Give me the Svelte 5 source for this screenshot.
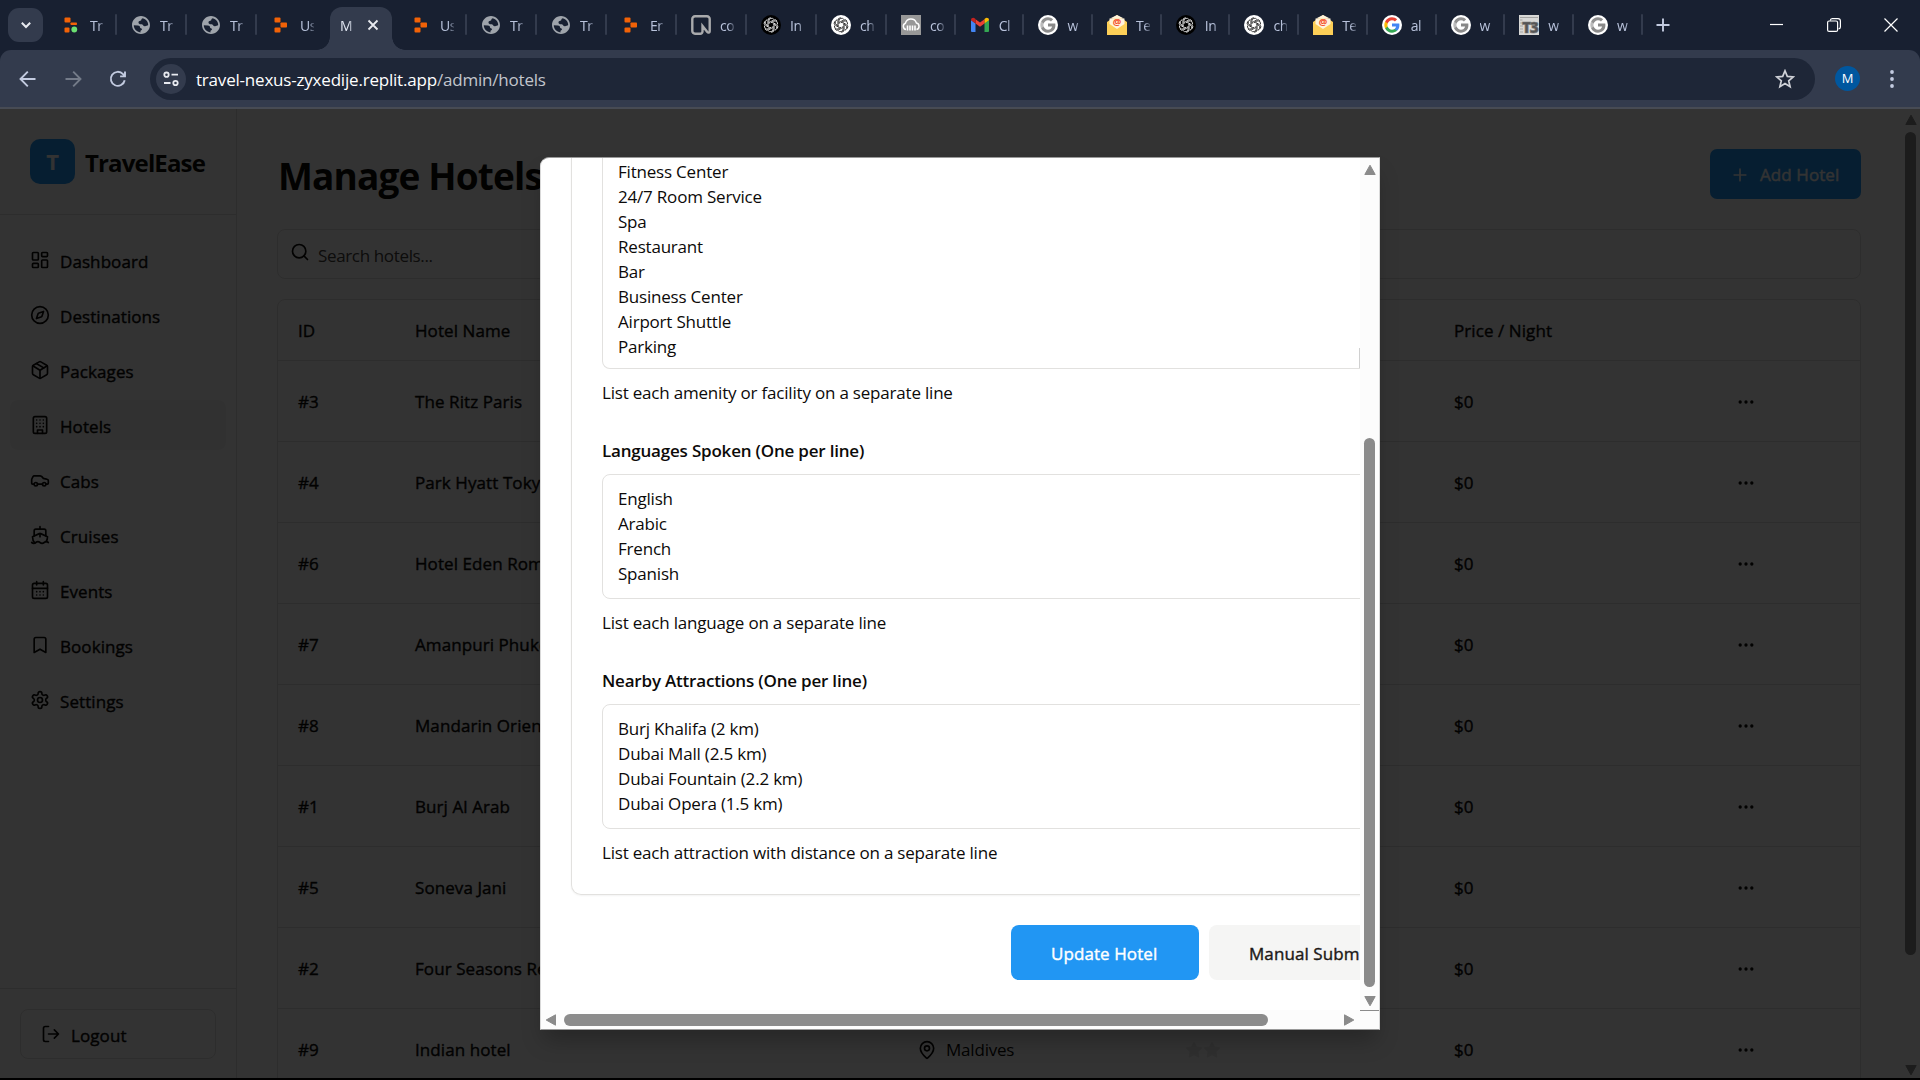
<script>
  const tabs = [
    { icon: 'replit-dot', label: 'Tr' },
    { icon: 'globe', label: 'Tr' },
    { icon: 'globe', label: 'Tr' },
    { icon: 'replit', label: 'Us', bare: true },
    { icon: null, label: 'M', active: true },
    { icon: 'replit', label: 'Us' },
    { icon: 'globe', label: 'Tr' },
    { icon: 'globe', label: 'Tr' },
    { icon: 'replit', label: 'Er' },
    { icon: 'neon', label: 'co' },
    { icon: 'gpt-dark', label: 'In' },
    { icon: 'gpt', label: 'ch' },
    { icon: 'cloud', label: 'co' },
    { icon: 'gmail', label: 'Cl' },
    { icon: 'g-grey', label: 'w' },
    { icon: 'mail', label: 'Te' },
    { icon: 'gpt-dark', label: 'In' },
    { icon: 'gpt', label: 'ch' },
    { icon: 'mail', label: 'Te' },
    { icon: 'g', label: 'al' },
    { icon: 'g-grey', label: 'w' },
    { icon: 't3', label: 'w' },
    { icon: 'g-grey', label: 'w' }
  ];
  const nav = ['Dashboard', 'Destinations', 'Packages', 'Hotels', 'Cabs', 'Cruises', 'Events', 'Bookings', 'Settings'];
  const hotels = [
    [3, 'The Ritz Paris'],
    [4, 'Park Hyatt Tokyo'],
    [6, 'Hotel Eden Rome'],
    [7, 'Amanpuri Phuket'],
    [8, 'Mandarin Oriental'],
    [1, 'Burj Al Arab'],
    [5, 'Soneva Jani'],
    [2, 'Four Seasons Resort'],
    [9, 'Indian hotel', 'Maldives']
  ];
  const amenities = ['Fitness Center', '24/7 Room Service', 'Spa', 'Restaurant', 'Bar', 'Business Center', 'Airport Shuttle', 'Parking'];
  const languages = ['English', 'Arabic', 'French', 'Spanish'];
  const attractions = ['Burj Khalifa (2 km)', 'Dubai Mall (2.5 km)', 'Dubai Fountain (2.2 km)', 'Dubai Opera (1.5 km)'];
  const petals = [0, 60, 120, 180, 240, 300];
</script>

{#snippet favicon(name)}
  <svg class="fav" viewBox="0 0 20 20">
    {#if name === 'replit' || name === 'replit-dot'}
      <g fill="#f26207">
        <rect x="3.500" y="2.500" width="6" height="5" rx="1" />
        <rect x="9.500" y="7.500" width="6.500" height={name === 'replit' ? 5 : 2.6} rx=".8" />
        <rect x="3.500" y="12.500" width={name === 'replit' ? 6 : 5} height="5" rx="1" />
      </g>
      {#if name === 'replit-dot'}<circle cx="13.300" cy="14.500" r="2.900" fill="#6be072" />{/if}
    {:else if name === 'globe'}
      <path transform="translate(-.8 -.8) scale(.9)" fill="#9fa4ab" d="M12 2C6.480 2 2 6.480 2 12s4.480 10 10 10 10-4.480 10-10S17.520 2 12 2zm-.6 18.200C7 19.700 4 16.100 4 12.300l4.600.2c1.600.1 2.200.7 2.300 1.900.1.900.7 1.200 1.500 1.400.9.300 1 1.600-.2 2-.7.2-.8 1-.8 2.400zM17.300 13.200c-1.300.5-2.500.1-3-.9-.4-.8-1.100-1.100-2.300-1.100-1.700 0-2.800-.8-2.800-2 0-1.300.9-1.700 2-1.800 1.100-.1 1.200-.8 1.300-1.700.1-.7.7-1 1.500-1.300 3.600 1 6 4 6 7.600 0 .6-1.400.7-2.700 1.200z" />
    {:else if name === 'neon'}
      <path d="M4 1.300h12A2.700 2.700 0 0 1 18.700 4v12.200c0 1.500-1.500 1.900-2.400.8L11.500 11v5.500a2.200 2.200 0 0 1-2.200 2.200H4A2.700 2.700 0 0 1 1.300 16V4A2.700 2.700 0 0 1 4 1.300Z" fill="#182031" stroke="#a9aaac" stroke-width="2.400" />
    {:else if name === 'gpt' || name === 'gpt-dark'}
      <circle cx="10" cy="10" r="10" fill={name === 'gpt' ? '#fff' : '#000'} />
      <g fill="none" stroke={name === 'gpt' ? '#222' : '#eee'} stroke-width=".85">
        {#each petals as a}
          <path d="M8 9V5.600a2.700 2.700 0 0 1 4.700-1.400M8.300 7.500l3.900-2.300a2.900 2.900 0 0 1 4 1" transform="rotate({a} 10 10)" />
        {/each}
      </g>
    {:else if name === 'cloud'}
      <rect width="20" height="20" fill="#989898" />
      <path d="M5 14.500a3.300 3.300 0 0 1-.6-6.300 5.800 5.800 0 0 1 11-.3 3.400 3.400 0 0 1 .1 6.600" fill="none" stroke="#fff" stroke-width="1.500" />
      <path d="M6.500 10.500v5M9 10.500v5M11.500 10.500v5M14 10.500v5" stroke="#fff" stroke-width="1.600" />
    {:else if name === 'gmail'}
      <path d="M1 16V5l4.500 3.400V17H2a1 1 0 0 1-1-1Z" fill="#4285f4" />
      <path d="M19 16V5l-4.500 3.400V17H18a1 1 0 0 0 1-1Z" fill="#34a853" />
      <path d="M5.500 8.400V4.200L10 7.600l4.500-3.400v4.200L10 11.800Z" fill="#ea4335" />
      <path d="M1 5.200c0-2.200 2.300-3 3.900-1.800l.6.500v4.500L1 5.300Z" fill="#c5221f" />
      <path d="M19 5.200c0-2.200-2.300-3-3.900-1.800l-.6.500v4.500L19 5.300Z" fill="#fbbc04" />
    {:else if name === 'g' || name === 'g-grey'}
      <circle cx="10" cy="10" r="10" fill="#fff" />
      <g transform="translate(1.600 1.600) scale(.7)">
        <path fill={name === 'g' ? '#4285f4' : '#888'} d="M22.560 12.250c0-.78-.07-1.530-.2-2.250H12v4.260h5.920c-.26 1.370-1.040 2.530-2.210 3.310v2.770h3.570c2.080-1.920 3.280-4.740 3.280-8.090z" />
        <path fill={name === 'g' ? '#34a853' : '#8c8c8c'} d="M12 23c2.970 0 5.460-.98 7.280-2.660l-3.570-2.770c-.98.66-2.230 1.060-3.710 1.060-2.860 0-5.290-1.930-6.160-4.530H2.180v2.840C3.990 20.530 7.700 23 12 23z" />
        <path fill={name === 'g' ? '#fbbc05' : '#bbb'} d="M5.840 14.090c-.22-.66-.35-1.360-.35-2.090s.13-1.430.35-2.090V7.070H2.180C1.430 8.550 1 10.220 1 12s.43 3.450 1.180 4.930l3.660-2.840z" />
        <path fill={name === 'g' ? '#ea4335' : '#909090'} d="M12 5.380c1.620 0 3.060.56 4.210 1.640l3.150-3.150C17.450 2.090 14.970 1 12 1 7.700 1 3.990 3.470 2.180 7.070l3.660 2.840c.87-2.600 3.300-4.530 6.160-4.530z" />
      </g>
    {:else if name === 'mail'}
      <path d="M0 7 10 0l10 7v13H0Z" fill="#fdcf57" />
      <path d="M2.500 3.500h15V9L10 14 2.500 9Z" fill="#fff3dc" />
      <path d="m3 3.500 7-3.500 7 3.500Z" fill="#fff3dc" />
      <text x="10" y="10.200" text-anchor="middle" font-size="9.500" font-weight="700" fill="#f4512c">@</text>
    {:else if name === 't3'}
      <rect width="20" height="20" fill="#d8d8d6" />
      <path d="M1 2.500h18M1 5h2.500M1 8h2M1 11h3M1 14h3M1 17h3" stroke="#a5a5a3" stroke-width="1" />
      <text x="3" y="18" font-size="15.500" font-weight="800" letter-spacing="-1.500" fill="#555" stroke="#777" stroke-width=".6">T3</text>
    {/if}
  </svg>
{/snippet}

{#snippet icon(name)}
  <svg class="ico" viewBox="0 0 24 24">
    {#if name === 'Dashboard'}
      <rect width="7" height="9" x="3" y="3" rx="1" /><rect width="7" height="5" x="14" y="3" rx="1" /><rect width="7" height="9" x="14" y="12" rx="1" /><rect width="7" height="5" x="3" y="16" rx="1" />
    {:else if name === 'Destinations'}
      <circle cx="12" cy="12" r="10" /><path d="m16.240 7.760-1.804 5.411a2 2 0 0 1-1.265 1.265L7.760 16.240l1.804-5.411a2 2 0 0 1 1.265-1.265z" />
    {:else if name === 'Packages'}
      <path d="M11 21.730a2 2 0 0 0 2 0l7-4A2 2 0 0 0 21 16V8a2 2 0 0 0-1-1.730l-7-4a2 2 0 0 0-2 0l-7 4A2 2 0 0 0 3 8v8a2 2 0 0 0 1 1.730z" /><path d="M12 22V12" /><path d="m3.300 7 7.703 4.734a2 2 0 0 0 1.994 0L20.700 7" /><path d="m7.500 4.270 9 5.150" />
    {:else if name === 'Hotels'}
      <rect width="16" height="20" x="4" y="2" rx="2" /><path d="M9 22v-4h6v4M8 6h.01M16 6h.01M12 6h.01M12 10h.01M12 14h.01M16 10h.01M16 14h.01M8 10h.01M8 14h.01" />
    {:else if name === 'Cabs'}
      <path d="M19 17h2c.6 0 1-.4 1-1v-3c0-.9-.7-1.700-1.500-1.900C18.700 10.600 16 10 16 10s-1.300-1.400-2.200-2.300c-.5-.4-1.100-.7-1.800-.7H5c-.6 0-1.100.4-1.400.9l-1.400 2.900A3.700 3.700 0 0 0 2 12v4c0 .6.4 1 1 1h2" /><circle cx="7" cy="17" r="2" /><path d="M9 17h6" /><circle cx="17" cy="17" r="2" />
    {:else if name === 'Cruises'}
      <path d="M12 10.189V14M12 2v3M19 13V7a2 2 0 0 0-2-2H7a2 2 0 0 0-2 2v6" /><path d="M19.380 20A11.600 11.600 0 0 0 21 14l-8.188-3.639a2 2 0 0 0-1.624 0L3 14a11.600 11.600 0 0 0 2.810 7.760" /><path d="M2 21c.6.5 1.200 1 2.500 1 2.500 0 2.500-2 5-2 1.300 0 1.900.5 2.500 1s1.200 1 2.500 1c2.500 0 2.500-2 5-2 1.300 0 1.900.5 2.500 1" />
    {:else if name === 'Events'}
      <path d="M8 2v4M16 2v4" /><rect width="18" height="18" x="3" y="4" rx="2" /><path d="M3 10h18M8 14h.01M12 14h.01M16 14h.01M8 18h.01M12 18h.01M16 18h.01" />
    {:else if name === 'Bookings'}
      <path d="m19 21-7-4-7 4V5a2 2 0 0 1 2-2h10a2 2 0 0 1 2 2v16z" />
    {:else if name === 'Settings'}
      <path d="M12.220 2h-.44a2 2 0 0 0-2 2v.18a2 2 0 0 1-1 1.730l-.43.25a2 2 0 0 1-2 0l-.15-.08a2 2 0 0 0-2.730.73l-.22.38a2 2 0 0 0 .73 2.730l.15.1a2 2 0 0 1 1 1.720v.51a2 2 0 0 1-1 1.740l-.15.09a2 2 0 0 0-.73 2.730l.22.38a2 2 0 0 0 2.730.73l.15-.08a2 2 0 0 1 2 0l.43.25a2 2 0 0 1 1 1.730V20a2 2 0 0 0 2 2h.44a2 2 0 0 0 2-2v-.18a2 2 0 0 1 1-1.730l.43-.25a2 2 0 0 1 2 0l.15.08a2 2 0 0 0 2.730-.73l.22-.39a2 2 0 0 0-.73-2.730l-.15-.08a2 2 0 0 1-1-1.740v-.5a2 2 0 0 1 1-1.740l.15-.09a2 2 0 0 0 .73-2.730l-.22-.38a2 2 0 0 0-2.730-.73l-.15.08a2 2 0 0 1-2 0l-.43-.25a2 2 0 0 1-1-1.730V4a2 2 0 0 0-2-2z" /><circle cx="12" cy="12" r="3" />
    {:else if name === 'logout'}
      <path d="M9 21H5a2 2 0 0 1-2-2V5a2 2 0 0 1 2-2h4M16 17l5-5-5-5M21 12H9" />
    {:else if name === 'search'}
      <circle cx="11" cy="11" r="8" /><path d="m21 21-4.300-4.300" />
    {:else if name === 'plus'}
      <path d="M5 12h14M12 5v14" />
    {:else if name === 'dots'}
      <circle cx="12" cy="12" r="1" /><circle cx="19" cy="12" r="1" /><circle cx="5" cy="12" r="1" />
    {:else if name === 'pin'}
      <path d="M20 10c0 4.993-5.539 10.193-7.399 11.799a1 1 0 0 1-1.202 0C9.539 20.193 4 14.993 4 10a8 8 0 0 1 16 0" /><circle cx="12" cy="10" r="3" />
    {:else if name === 'star'}
      <path class="star" d="M12 2l3.090 6.260L22 9.270l-5 4.870 1.180 6.880L12 17.770l-6.180 3.250L7 14.140 2 9.270l6.910-1.010z" />
    {/if}
  </svg>
{/snippet}

{#snippet arrow(dir)}
  <svg class="arrow {dir}" viewBox="0 0 12 12"><path d="M6 1.200 11.200 10.500H.8Z" /></svg>
{/snippet}

<div class="screen">
  <header class="tabstrip">
    <button class="tab-search" aria-label="Search tabs">
      <svg viewBox="0 0 12 12"><path d="m1.800 3.800 4.200 4.200 4.200-4.200" /></svg>
    </button>
    <div class="tabs">
      {#each tabs as tab, i}
        <div class="tab" class:active={tab.active} class:narrow={i > 11} class:bare={tab.bare || tab.active}>
          {#if tab.icon}{@render favicon(tab.icon)}{/if}
          <span class="tab-label">{tab.label}</span>
          {#if tab.active}<svg class="tab-close" viewBox="0 0 12 12"><path d="m1.500 1.500 9 9m0-9-9 9" /></svg>{/if}
        </div>
      {/each}
    </div>
    <svg class="new-tab" viewBox="0 0 14 14"><path d="M7 .5v13M.5 7h13" /></svg>
    <div class="win-controls">
      <svg viewBox="0 0 14 14"><path d="M0 6.500h13" /></svg>
      <svg viewBox="0 0 14 14"><rect x=".6" y="3" width="10" height="10.400" rx="1.500" /><path d="M3.300 2.600C3.400 1.200 4 .6 5.200.6H11a2.500 2.500 0 0 1 2.400 2.500V9c0 1-.7 1.700-1.800 1.900" /></svg>
      <svg viewBox="0 0 14 14"><path d="m.5.500 13 13m0-13-13 13" /></svg>
    </div>
  </header>

  <div class="toolbar">
    <div class="history">
      <svg viewBox="0 0 20 20"><path d="M17.500 10h-15M9.800 2.700 2.500 10l7.300 7.300" /></svg>
      <svg class="off" viewBox="0 0 20 20"><path d="M2.500 10h15M10.200 2.700l7.300 7.300-7.300 7.300" /></svg>
      <svg viewBox="0 0 20 20"><path d="M16.700 11.200A7 7 0 1 1 15 5.100l1.900 2M17 2.500v4.900h-4.900" /></svg>
    </div>
    <div class="omnibox">
      <span class="site"><svg viewBox="0 0 18 18"><circle cx="4.500" cy="4.700" r="2.200" /><path d="M9.500 4.700H16M2 13h6.500" /><circle cx="13.500" cy="13" r="2.200" /></svg></span>
      <span class="url"><b>travel-nexus-zyxedije.replit.app</b>/admin/hotels</span>
      <svg class="fav-star" viewBox="0 0 20 20"><path d="m10 1.800 2.300 5.600 6 .5-4.600 3.900 1.400 5.900-5.100-3.200-5.100 3.200 1.400-5.900L1.700 7.900l6-.5Z" /></svg>
    </div>
    <span class="avatar">M</span>
    <svg class="kebab" viewBox="0 0 4 18"><circle cx="2" cy="2" r="1.900" /><circle cx="2" cy="9" r="1.900" /><circle cx="2" cy="16" r="1.900" /></svg>
  </div>

  <div class="page">
    <aside>
      <div class="brand"><span class="logo">T</span><span class="brand-name">TravelEase</span></div>
      <nav>
        {#each nav as item}
          <div class="nav-item" class:current={item === 'Hotels'}>{@render icon(item)}<span>{item}</span></div>
        {/each}
      </nav>
      <div class="account"><div class="logout">{@render icon('logout')}<span>Logout</span></div></div>
    </aside>

    <main>
      <div class="title-row">
        <h1>Manage Hotels</h1>
        <div class="add">{@render icon('plus')}<span>Add Hotel</span></div>
      </div>
      <div class="search">{@render icon('search')}<span>Search hotels...</span></div>
      <div class="table">
        <div class="row head"><span>ID</span><span>Hotel Name</span><span></span><span></span><span>Price / Night</span><span></span></div>
        {#each hotels as [id, name, place]}
          <div class="row">
            <span>#{id}</span><span>{name}</span>
            <span class="place">{#if place}{@render icon('pin')}<em>{place}</em>{/if}</span>
            <span class="rating">{#if place}{@render icon('star')}{@render icon('star')}{/if}</span>
            <span>$0</span><span class="more">{@render icon('dots')}</span>
          </div>
        {/each}
      </div>
    </main>

    <div class="page-scroll">{@render arrow('up')}<i></i>{@render arrow('down')}</div>

    <div class="overlay">
      <div class="dialog">
        <div class="viewport">
          <div class="card">
            <div class="field tall">{#each amenities as line}<p>{line}</p>{/each}</div>
            <div class="hint">List each amenity or facility on a separate line</div>
            <div class="label">Languages Spoken (One per line)</div>
            <div class="field">{#each languages as line}<p>{line}</p>{/each}</div>
            <div class="hint">List each language on a separate line</div>
            <div class="label">Nearby Attractions (One per line)</div>
            <div class="field">{#each attractions as line}<p>{line}</p>{/each}</div>
            <div class="hint">List each attraction with distance on a separate line</div>
          </div>
          <div class="actions"><span class="btn primary">Update Hotel</span><span class="btn">Manual Submit</span></div>
        </div>
        <div class="vbar">{@render arrow('up')}<i></i>{@render arrow('down')}</div>
        <div class="hbar">{@render arrow('left')}<i></i>{@render arrow('right')}</div>
        <div class="corner"></div>
      </div>
    </div>
  </div>
  <div class="taskline"></div>
</div>

<style>
  :global(body) { margin: 0; overflow: hidden; }
  .screen, .screen * { box-sizing: border-box; }
  .screen {
    width: 1920px; height: 1080px; display: flex; flex-direction: column; overflow: hidden;
    background: #182031; font-family: 'Open Sans', 'Noto Sans', sans-serif; font-size: 17px;
    letter-spacing: -0.2px; line-height: 25px; color: #0c0a09;
  }
  svg { display: block; flex: none; }

  .tabstrip { height: 50px; flex: none; display: flex; padding: 0 22px 0 8px; }
  .tab-search { width: 35px; height: 34px; margin: 8px 4px 0 0; padding: 0; border: 0; border-radius: 11px; background: #333b4d; display: grid; place-items: center; }
  .tab-search svg { width: 12px; height: 12px; fill: none; stroke: #e8eaf0; stroke-width: 2; }
  .tabs { display: flex; }
  .tab { position: relative; width: 70px; height: 50px; padding-left: 14px; display: flex; align-items: center; gap: 9px; }
  .tab.narrow { width: 68.700px; }
  .tab::after { content: ''; position: absolute; right: 0; top: 14px; width: 2px; height: 21px; background: #333b4d; border-radius: 1px; }
  .tab.bare::after { display: none; }
  .fav { width: 20px; height: 20px; }
  .tab-label { width: 14px; overflow: hidden; white-space: nowrap; font-size: 14px; color: #b9c3dc; letter-spacing: -.5px; -webkit-mask-image: linear-gradient(90deg, #000 60%, rgba(0, 0, 0, .25)); mask-image: linear-gradient(90deg, #000 60%, rgba(0, 0, 0, .25)); }
  .tab.active { width: 62px; height: 43px; margin: 7px 5px 0 3px; padding: 0 0 7px 10px; gap: 13px; background: #333b4d; border-radius: 12px 12px 0 0; }
  .tab.active::after, .tab.active::before { content: ''; display: block; position: absolute; bottom: 0; top: auto; width: 13px; height: 13px; border-radius: 0; }
  .tab.active::before { left: -13px; background: radial-gradient(circle at 0 0, transparent 12.500px, #333b4d 13px); }
  .tab.active::after { right: -13px; background: radial-gradient(circle at 100% 0, transparent 12.500px, #333b4d 13px); }
  .tab.active .tab-label { color: #e4e9f5; }
  .tab-close { width: 12px; height: 12px; stroke: #e8eaf0; stroke-width: 1.800; }
  .new-tab { width: 14px; height: 14px; margin: 18px 0 0 13px; stroke: #c3cbe0; stroke-width: 1.900; }
  .win-controls { display: flex; gap: 43px; margin: 18px 0 0 auto; }
  .win-controls svg { width: 14px; height: 14px; fill: none; stroke: #fff; stroke-width: 1.200; }

  .toolbar { height: 59px; flex: none; display: flex; background: #333b4d; border-radius: 11px 11px 0 0; border-bottom: 2px solid #474b54; padding: 8px 26px 7px 18px; }
  .history { width: 132px; display: flex; gap: 25px; align-items: center; }
  .history svg { width: 20px; height: 20px; fill: none; stroke: #c3cbe0; stroke-width: 1.900; }
  .history .off { stroke: #747b89; }
  .omnibox { width: 1665px; height: 42px; border-radius: 21px; background: #1e2637; display: flex; align-items: center; padding: 0 20px 0 6px; }
  .site { width: 30px; height: 30px; border-radius: 50%; background: #333b4d; display: grid; place-items: center; }
  .site svg { width: 18px; height: 18px; fill: none; stroke: #e8eaf0; stroke-width: 1.800; }
  .url { margin-left: 10px; color: #c2c5cc; flex: 1; white-space: nowrap; }
  .url b { font-weight: 400; color: #fff; }
  .fav-star { width: 20px; height: 20px; fill: none; stroke: #d0d2d8; stroke-width: 1.700; }
  .avatar { width: 25px; height: 25px; margin: 8px 0 0 20px; border-radius: 50%; background: #00579f; color: #fff; font-size: 13px; text-align: center; letter-spacing: 0; }
  .kebab { width: 4px; height: 18px; margin: 12px 0 0 auto; fill: #c3cbe0; }

  .page { position: relative; height: 969px; flex: none; display: flex; background: #fff; overflow: hidden; }
  .ico { width: 20px; height: 20px; fill: none; stroke: currentColor; stroke-width: 2; stroke-linecap: round; stroke-linejoin: round; }
  /* Medium weight: regular glyphs thickened by a hairline stroke. */
  .nav-item span, .logout span, .row > span, .add span, .btn { letter-spacing: .08px; -webkit-text-stroke: .4px currentColor; }
  aside { width: 237px; border-right: 1px solid #e2e1df; display: flex; flex-direction: column; }
  .brand { height: 106px; border-bottom: 1px solid #e2e1df; display: flex; align-items: center; padding: 0 0 0 30px; gap: 10px; }
  .logo { width: 45px; height: 45px; border-radius: 10px; background: #2196f3; color: #fff; font-weight: 700; font-size: 22px; line-height: 45px; text-align: center; }
  .brand-name { padding-top: 2px; font-size: 24px; font-weight: 700; letter-spacing: -.850px; }
  nav { padding: 20px 10px; display: flex; flex-direction: column; gap: 5px; flex: 1; }
  .nav-item { height: 50px; padding-left: 20px; display: flex; align-items: center; gap: 10px; border-radius: 8px; }
  .nav-item span, .logout span { padding-top: 2px; }
  .nav-item.current { background: #f5f5f4; }
  .account { height: 90px; border-top: 1px solid #e2e1df; padding: 20px 20px 0; }
  .logout { height: 50px; border: 1px solid #e2e1df; border-radius: 8px; display: flex; align-items: center; gap: 10px; padding-left: 20px; }

  main { width: 1584px; margin-left: 40px; padding-top: 40px; }
  .title-row { height: 50px; display: flex; justify-content: space-between; }
  h1 { margin: 7px 0 0 1px; font-size: 37px; line-height: 40px; font-weight: 700; letter-spacing: -.850px; }
  .add { width: 151px; height: 50px; border-radius: 7px; background: #2196f3; color: #fff; display: flex; align-items: center; padding-left: 20px; gap: 10px; padding-top: 1px; }
  .search { height: 50px; margin-top: 30px; border: 1px solid #e2e1df; border-radius: 8px; display: flex; align-items: center; gap: 8px; padding-left: 12px; color: #44403c; letter-spacing: -.35px; }
  .search .ico { margin-bottom: 4px; color: #0c0a09; }
  .search span { padding-top: 3px; }
  .table { margin-top: 20px; border: 1px solid #e2e1df; border-radius: 8px 8px 0 0; }
  .row { height: 81px; display: grid; grid-template-columns: 117px 502px 268px 269px 282px 1fr; align-items: center; padding: 1px 0 0 20px; border-bottom: 1px solid #e2e1df; white-space: nowrap; }
  .row.head { height: 61px; }
  .place { display: flex; align-items: center; gap: 9px; }
  .place em { font-style: normal; letter-spacing: -.2px; -webkit-text-stroke: 0; }
  .rating { display: flex; }
  .rating .ico { width: 18px; height: 18px; color: #ebebeb; }
  .star { fill: #ebebeb; }

  .arrow { width: 12px; height: 12px; fill: #8b8b8b; stroke: #8b8b8b; stroke-linejoin: round; }
  .down { transform: rotate(180deg); }
  .left { transform: rotate(-90deg); }
  .right { transform: rotate(90deg); }
  .page-scroll { width: 19px; margin-left: auto; display: flex; flex-direction: column; align-items: center; padding: 5px 0 2px; }
  .page-scroll i { width: 11px; height: 823px; margin: 6px 0 auto; border-radius: 6px; background: #8b8b8b; }

  .overlay { position: absolute; inset: 0; background: rgba(0, 0, 0, .8); }
  .dialog { width: 840px; height: 873px; margin: 48px 0 0 540px; display: grid; grid-template: 852px 19px / 819px 19px; background: #fff; border: 1px solid #d9d9d9; border-top-color: #999; border-bottom-color: #999; border-radius: 9px 0 0 0; overflow: hidden; box-shadow: 0 14px 22px -4px rgba(0, 0, 0, .25); }
  .viewport { overflow: hidden; }
  .card { width: 1000px; height: 737px; margin-left: 30px; border: solid #e2e1df; border-width: 0 1px 1px; border-radius: 0 0 10px 10px; padding-left: 30px; box-shadow: 0 1px 2px rgba(0, 0, 0, .05); }
  .field { width: 900px; height: 125px; border: 1px solid #e2e1df; border-radius: 8px; padding: 11px 15px; }
  .field.tall { height: 211px; border-top: 0; border-radius: 0 0 0 8px; padding-top: 1px; }
  /* Resize grip edge at the clipped end of the tallest field. */
  .field.tall { background: linear-gradient(#d0d0d0, #d0d0d0) 756px 100% / 1px 20px no-repeat; }
  p { margin: 0; height: 25px; }
  .hint { height: 25px; margin-top: 11px; }
  .label { height: 25px; margin: 33px 0 11px; font-weight: 600; }
  .actions { display: flex; gap: 10px; margin: 30px 0 0 470px; }
  .btn { flex: none; width: 188px; height: 55px; border-radius: 8px; background: #f5f5f4; display: flex; align-items: center; padding: 2px 0 0 40px; white-space: nowrap; color: #1c1917; }
  .btn.primary { background: #2196f3; color: #fff; }
  .vbar { background: #fcfcfc; display: flex; flex-direction: column; align-items: center; padding: 6px 0 3px; }
  .vbar i { width: 11px; height: 549px; margin: auto 0 8px; border-radius: 6px; background: #8b8b8b; }
  .hbar { background: #fcfcfc; display: flex; align-items: center; padding: 0 5px 0 4px; }
  .hbar i { width: 704px; height: 12px; margin: 0 auto 0 7px; border-radius: 6px; background: #8b8b8b; }
  .corner { background: #fcfcfc; border-top: 1px solid #8b8b8b; }
  .taskline { height: 2px; background: #000; }
</style>
